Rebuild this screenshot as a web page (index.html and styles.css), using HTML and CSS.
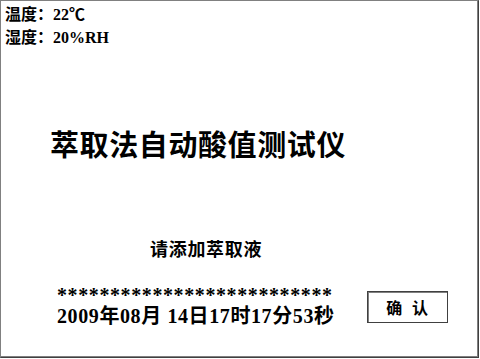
FILE: index.html
```html
<!DOCTYPE html>
<html lang="zh-CN">
<head>
<meta charset="utf-8">
<title>萃取法自动酸值测试仪</title>
<link rel="stylesheet" href="styles.css">
</head>
<body>
<div class="screen">
  <div class="status">
    <div class="status-line">温度：22℃</div>
    <div class="status-line">湿度：20%RH</div>
  </div>
  <h1 class="title">萃取法自动酸值测试仪</h1>
  <div class="prompt">请添加萃取液</div>
  <div class="bottom-row">
    <div class="readout">
      <div class="stars">**************************</div>
      <div class="datetime">2009年08月 14日17时17分53秒</div>
    </div>
    <button class="confirm" type="button">确&nbsp;认</button>
  </div>
</div>
</body>
</html>
```
FILE: styles.css
```css
html, body {
  margin: 0;
  padding: 0;
  background: #ffffff;
}

body {
  font-family: "Liberation Serif", "Noto Sans CJK SC", serif;
  font-weight: bold;
  color: #000000;
}

.screen {
  box-sizing: border-box;
  width: 479px;
  height: 358px;
  border: 1px solid #808080;
  border-right-color: #404040;
  border-bottom-color: #404040;
  box-shadow: inset -1px -1px 0 #808080;
  display: flex;
  flex-direction: column;
}

.status {
  padding: 2px 0 0 4px;
  font-size: 16px;
}

.status-line {
  line-height: 23px;
  height: 23px;
}

.title {
  margin: 74px 0 0 49px;
  font-family: "Noto Sans CJK SC", sans-serif;
  font-size: 29px;
  font-weight: bold;
  letter-spacing: 0.6px;
  line-height: 40px;
}

.prompt {
  margin: 73px 0 0 149px;
  font-family: "Noto Sans CJK SC", sans-serif;
  font-size: 18px;
  line-height: 24px;
  letter-spacing: 0.7px;
}

.bottom-row {
  display: flex;
  align-items: flex-start;
  margin-top: 26px;
  padding-left: 56px;
}

.readout {
  display: flex;
  flex-direction: column;
}

.stars {
  font-size: 20px;
  line-height: 19px;
  height: 22px;
  letter-spacing: 0.6px;
}

.datetime {
  font-size: 20px;
  line-height: 16px;
  letter-spacing: 0.6px;
}

.confirm {
  box-sizing: border-box;
  margin: 5px 0 0 32px;
  width: 81px;
  height: 32px;
  padding: 0;
  background: #ffffff;
  border: 1px solid #404040;
  box-shadow: inset 1px 1px 0 #808080;
  font-family: "Noto Sans CJK SC", sans-serif;
  font-size: 16px;
  font-weight: bold;
  color: #000000;
  letter-spacing: 0;
  word-spacing: 6px;
}
```
